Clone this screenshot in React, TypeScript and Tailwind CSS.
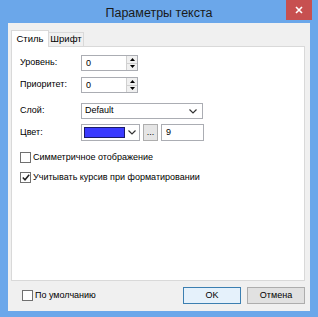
import React from 'react';

const font = { fontFamily: '"Liberation Sans", Arial, sans-serif' };

function Spin({ value }: { value: string }) {
  return (
    <div className="flex h-[16px] w-[57px] border border-[#abadb3] bg-white">
      <div className="flex-1 pl-[4px] leading-[14px]">{value}</div>
      <div className="flex w-[11px] flex-col border-l border-[#d0d0d0] bg-[#f0f0f0]">
        <div className="flex flex-1 items-center justify-center border-b border-[#d0d0d0]">
          <svg width="5" height="3" viewBox="0 0 5 3"><path d="M2.5 0L5 3H0z" fill="#000" /></svg>
        </div>
        <div className="flex flex-1 items-center justify-center">
          <svg width="5" height="3" viewBox="0 0 5 3"><path d="M0 0H5L2.5 3z" fill="#000" /></svg>
        </div>
      </div>
    </div>
  );
}

function Chevron() {
  return (
    <svg width="8" height="5" viewBox="0 0 8 5">
      <path d="M0.5 0.5L4 4L7.5 0.5" stroke="#333" strokeWidth="1.2" fill="none" />
    </svg>
  );
}

function Check({ checked }: { checked?: boolean }) {
  return (
    <div className="flex h-[11px] w-[11px] items-center justify-center border border-[#707070] bg-white">
      {checked && (
        <svg width="8" height="7" viewBox="0 0 8 7">
          <path d="M0.8 3.5L3 5.8L7.2 0.8" stroke="#222" strokeWidth="1.5" fill="none" />
        </svg>
      )}
    </div>
  );
}

export default function App() {
  return (
    <div className="flex h-[317px] w-[318px] flex-col bg-[#6ba7ea] text-[9px] text-black" style={font}>
      <div className="relative flex h-[23px] items-center justify-center pt-[3px]">
        <span className="text-[12.5px] leading-none text-[#1a1a1a]">Параметры текста</span>
        <div className="absolute right-[6px] top-0 flex h-[20px] w-[26px] items-center justify-center bg-[#c75050]">
          <svg width="8" height="8" viewBox="0 0 8 8">
            <path d="M1 1L7 7M7 1L1 7" stroke="#fff" strokeWidth="1.6" />
          </svg>
        </div>
      </div>
      <div className="mx-[8px] mb-[6px] flex flex-1 flex-col bg-[#f0f0f0] pl-[3px] pr-[5px] pt-[7px]">
        <div className="flex h-[16px] items-end">
          <div className="relative z-10 -mb-px flex h-[17px] w-[38px] items-center justify-center border border-b-0 border-[#d9d9d9] bg-white text-[9.5px]">
            Стиль
          </div>
          <div className="flex h-[14px] w-[35px] items-center justify-center border border-b-0 border-l-0 border-[#d9d9d9] bg-[#f0f0f0] text-[9.5px]">
            Шрифт
          </div>
        </div>
        <div className="flex h-[235px] flex-col border border-[#d9d9d9] bg-white pl-[8px] pt-[8px]">
          <div className="flex items-center">
            <span className="w-[61px]">Уровень:</span>
            <Spin value="0" />
          </div>
          <div className="mt-[6px] flex items-center">
            <span className="w-[61px]">Приоритет:</span>
            <Spin value="0" />
          </div>
          <div className="mt-[10px] flex items-center">
            <span className="w-[61px]">Слой:</span>
            <div className="flex h-[16px] w-[122px] items-center justify-between border border-[#abadb3] bg-white pl-[3px] pr-[5px]">
              <span>Default</span>
              <Chevron />
            </div>
          </div>
          <div className="mt-[5px] flex items-center">
            <span className="w-[61px]">Цвет:</span>
            <div className="flex h-[17px] w-[59px] items-center border border-[#abadb3] bg-white pl-[2px]">
              <div className="h-[11px] w-[41px] border border-[#1a1a6a] bg-[#3b3bff]" />
              <div className="flex flex-1 justify-center">
                <Chevron />
              </div>
            </div>
            <div className="ml-[3px] flex h-[17px] w-[15px] items-end justify-center border border-[#adadad] bg-[#e5e5e5] pb-[3px] leading-none">
              ...
            </div>
            <div className="ml-[3px] flex h-[17px] w-[43px] items-center border border-[#abadb3] bg-white pl-[4px]">9</div>
          </div>
          <div className="mt-[10px] flex items-center gap-[2px]">
            <Check />
            <span>Симметричное отображение</span>
          </div>
          <div className="mt-[6px] flex items-center gap-[2px]">
            <Check checked />
            <span>Учитывать курсив при форматировании</span>
          </div>
        </div>
        <div className="mt-[6px] flex items-center">
          <div className="ml-[11px] flex items-center gap-[2px]">
            <Check />
            <span>По умолчанию</span>
          </div>
          <div className="ml-auto flex h-[17px] w-[58px] items-center justify-center border border-[#3c7fb1] bg-[#e5f1fb]">
            OK
          </div>
          <div className="ml-[6px] flex h-[17px] w-[58px] items-center justify-center border border-[#adadad] bg-[#e1e1e1]">
            Отмена
          </div>
        </div>
      </div>
    </div>
  );
}
